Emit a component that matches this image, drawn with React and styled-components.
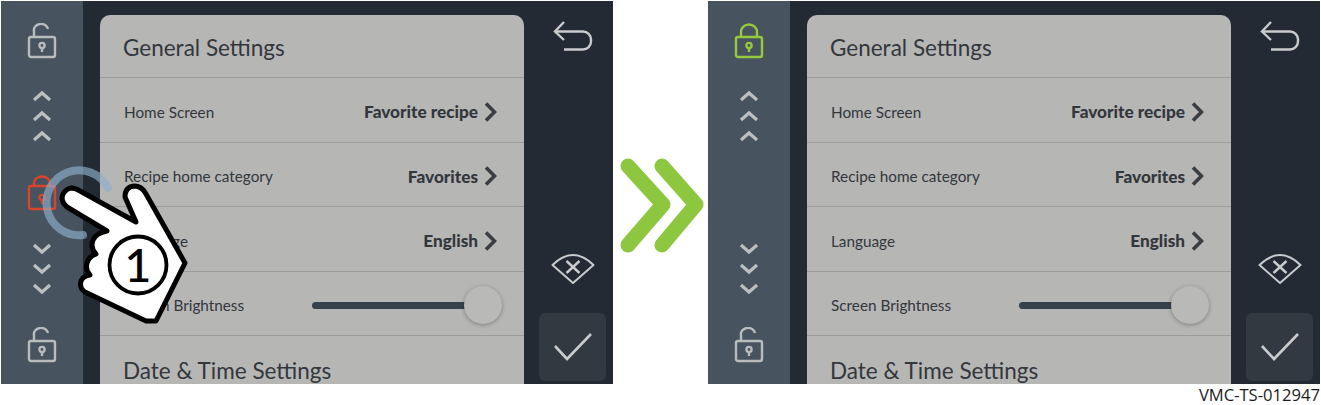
import React from 'react';
import styled, { createGlobalStyle } from 'styled-components';

const GlobalStyle = createGlobalStyle`
  html, body {
    margin: 0;
    background: #fff;
    font-family: Lato, "Open Sans", sans-serif;
  }
`;

const Page = styled.div`
  width: 1321px;
  height: 405px;
  box-sizing: border-box;
  padding: 1px 1px 0;
  overflow: hidden;
`;

const Stage = styled.div`
  display: flex;
  align-items: flex-start;
`;

const ScreenBox = styled.div`
  position: relative;
  flex: 0 0 612px;
  height: 383px;
  display: flex;
  background: #232a34;
  overflow: hidden;
`;

const Rail = styled.div`
  flex: 0 0 82px;
  box-sizing: border-box;
  padding: 22px 0 21px;
  display: flex;
  flex-direction: column;
  align-items: center;
  justify-content: space-between;
  background: #47535e;
`;

const RailSlot = styled.div`
  height: 36px;
  display: flex;
  align-items: center;
  justify-content: center;
`;

const Main = styled.div`
  flex: 0 0 441px;
  box-sizing: border-box;
  padding: 14px 0 0 17px;
`;

const Panel = styled.div`
  height: 100%;
  border-radius: 10px 10px 0 0;
  background: #b6b6b5;
  color: #33373c;
  overflow: hidden;
`;

const Title = styled.div`
  height: 63px;
  box-sizing: border-box;
  padding: ${(p) => (p.$last ? '21px' : '19px')} 24px 0 23px;
  font-size: 22.5px;
  line-height: 28px;
  border-bottom: ${(p) => (p.$last ? 'none' : '1px solid #9c9c9b')};
`;

const Row = styled.div`
  height: 64.5px;
  box-sizing: border-box;
  padding: 4px 27px 0 24px;
  display: flex;
  align-items: center;
  justify-content: space-between;
  border-bottom: 1px solid #9c9c9b;
  font-size: 15.3px;
`;

const Value = styled.span`
  display: flex;
  align-items: center;
  gap: 6px;
  font-size: 17.2px;
  font-weight: 900;
`;

const Slider = styled.div`
  position: relative;
  width: 170px;
  height: 7px;
  margin-right: 15px;
  border-radius: 4px;
  background: #36424b;
`;

const Knob = styled.div`
  position: absolute;
  right: -20px;
  top: -16px;
  width: 38px;
  height: 38px;
  border-radius: 50%;
  background: #b9b9b8;
  box-shadow: 0 1px 4px rgba(0, 0, 0, 0.3);
`;

const Side = styled.div`
  flex: 1;
  box-sizing: border-box;
  padding: 20px 7px 3px 15px;
  display: flex;
  flex-direction: column;
  align-items: center;
`;

const BackIcon = styled.svg`
  width: 40px;
  height: 32px;
  margin-left: 1px;
`;

const EyeIcon = styled.svg`
  width: 44px;
  height: 32px;
  margin-top: auto;
  margin-bottom: 28px;
`;

const ConfirmButton = styled.div`
  width: 67px;
  height: 68px;
  display: flex;
  align-items: center;
  justify-content: center;
  border-radius: 6px;
  background: #323941;
`;

const Pressed = styled.svg`
  position: absolute;
  left: 0;
  top: 0;
  width: 200px;
  height: 340px;
`;

const ArrowIcon = styled.svg`
  flex: 0 0 95px;
  height: 100px;
  margin-top: 154px;
`;

const Code = styled.div`
  margin-top: 1px;
  text-align: right;
  font-family: "Open Sans", sans-serif;
  font-size: 16.6px;
  line-height: 20px;
  color: #1c1c1c;
`;

const Lock = ({ open, tall, color }) => (
  <svg width="30" height="36" viewBox="0 0 30 36" fill="none" stroke={color} strokeWidth="2.4">
    <rect x="2" y={tall ? 11 : 14} width="26" height={tall ? 23 : 20} rx="2" />
    {open ? (
      <path d="M7 14V8a7 6 0 0 1 14-2" />
    ) : (
      <path d={tall ? 'M7 11V8a8 6.500 0 0 1 16 0v3' : 'M7 14V9a8 7.500 0 0 1 16 0v5'} />
    )}
    <circle cx="15" cy="22.500" r="2.600" />
    <path d="M15 25v4" />
  </svg>
);

const Chevrons = ({ up }) => (
  <svg width="20" height="54" viewBox="0 0 20 54" fill="none" stroke="#bcbfc0" strokeWidth="3.200">
    {[0, 20, 40].map((y) => (
      <path key={y} d={up ? `M2 ${y + 10}L10 ${y + 3}L18 ${y + 10}` : `M2 ${y + 3}L10 ${y + 10}L18 ${y + 3}`} />
    ))}
  </svg>
);

const ChevronRight = () => (
  <svg width="13" height="20" viewBox="0 0 13 20" fill="none" stroke="#3a3e43" strokeWidth="3.600">
    <path d="M2 1.500L10.500 10L2 18.500" />
  </svg>
);

const Screen = ({ locked }) => (
  <ScreenBox>
    <Rail>
      <RailSlot>
        <Lock open={!locked} color={locked ? '#97c93d' : '#b9bcbd'} />
      </RailSlot>
      <Chevrons up />
      <RailSlot>{!locked && <Lock tall color="#d9442c" />}</RailSlot>
      <Chevrons />
      <RailSlot>
        <Lock open color="#b9bcbd" />
      </RailSlot>
    </Rail>
    <Main>
      <Panel>
        <Title>General Settings</Title>
        <Row>
          Home Screen
          <Value>Favorite recipe <ChevronRight /></Value>
        </Row>
        <Row>
          Recipe home category
          <Value>Favorites <ChevronRight /></Value>
        </Row>
        <Row>
          Language
          <Value>English <ChevronRight /></Value>
        </Row>
        <Row>
          Screen Brightness
          <Slider><Knob /></Slider>
        </Row>
        <Title $last>Date &amp; Time Settings</Title>
      </Panel>
    </Main>
    <Side>
      <BackIcon viewBox="0 0 40 32" fill="none" stroke="#c9cbcc" strokeWidth="2.400">
        <path d="M11 1L2 10.500L11 19" />
        <path d="M2 10.500H30a8 8 0 0 1 8 8v2a8 8 0 0 1-8 8H11" />
      </BackIcon>
      <EyeIcon viewBox="0 0 44 32" fill="none" stroke="#c9cbcc" strokeWidth="2">
        <path d="M1.500 12Q22-8 42.500 12L22 30Z" strokeLinejoin="round" />
        <path d="M15.500 8L28.500 20M28.500 8L15.500 20" strokeWidth="2.400" />
      </EyeIcon>
      <ConfirmButton>
        <svg width="40" height="28" viewBox="0 0 40 28" fill="none" stroke="#c9cbcc" strokeWidth="2.600">
          <path d="M2 13L14 26L38 1" />
        </svg>
      </ConfirmButton>
    </Side>
    {!locked && (
      <Pressed viewBox="1 1 200 340">
        <path d="M108 188A32.500 32.500 0 1 0 83 235" fill="none" stroke="#8fb0cc" strokeOpacity="0.65" strokeWidth="8" strokeLinecap="round" />
        <path
          d="M71 188Q76 188 80 191L136 222L125 197Q125 187 134 186Q142 186 146 194L185 263L156 321L146 321L85 292Q79 288 81 281Q83 276 90 275Q85 270 87 263Q89 256 96 254Q90 248 93 240Q96 233 107 231L67 207Q60 201 63 194Q66 189 71 188Z"
          fill="#fff"
          stroke="#000"
          strokeWidth="5"
          strokeLinejoin="round"
        />
        <circle cx="138" cy="265" r="28.500" fill="#fff" stroke="#000" strokeWidth="3.800" />
        <text x="138" y="282" textAnchor="middle" fontFamily="Lato, sans-serif" fontSize="47" fontWeight="500" fill="#000">1</text>
      </Pressed>
    )}
  </ScreenBox>
);

export default function App() {
  return (
    <Page>
      <GlobalStyle />
      <Stage>
        <Screen />
        <ArrowIcon viewBox="0 0 95 100" fill="none" stroke="#8dc63f" strokeWidth="15" strokeLinecap="round" strokeLinejoin="round">
          <path d="M15 11L50 49.500L15 90" />
          <path d="M49 11L83 49.500L49 90" />
        </ArrowIcon>
        <Screen locked />
      </Stage>
      <Code>VMC-TS-012947</Code>
    </Page>
  );
}
